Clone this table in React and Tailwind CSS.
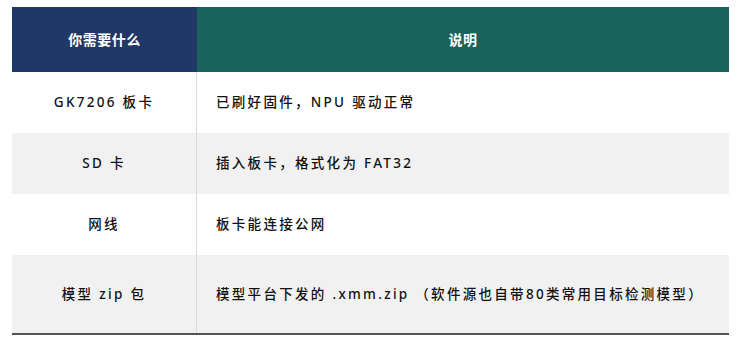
const ROWS = [
  { need: 'GK7206 板卡', desc: '已刷好固件，NPU 驱动正常', h: 'h-[61px]' },
  { need: 'SD 卡', desc: '插入板卡，格式化为 FAT32', h: 'h-[61px]' },
  { need: '网线', desc: '板卡能连接公网', h: 'h-[61px]' },
  { need: '模型 zip 包', desc: '模型平台下发的 .xmm.zip （软件源也自带80类常用目标检测模型）', h: 'h-[78px]' },
];

export default function App() {
  return (
    <div className="w-[738px] h-[343px] bg-white pt-[7px] pl-[12px] font-['Noto_Sans','Noto_Sans_CJK_SC',sans-serif]">
      <div className="w-[717px] border-b-2 border-[#555555]">
        {/* header */}
        <div className="grid grid-cols-[185px_1fr] h-[65px] text-white text-[14px] font-bold">
          <div className="bg-[#1f3868] flex items-center justify-center tracking-[0.5px]">你需要什么</div>
          <div className="bg-[#1a635c] flex items-center justify-center tracking-[0.5px]">说明</div>
        </div>

        {/* rows */}
        {ROWS.map((r, i) => (
          <div
            key={i}
            className={`grid grid-cols-[185px_1fr] ${r.h} text-[13.5px] font-medium text-[#111111] tracking-[2.3px] ${
              i % 2 === 1 ? 'bg-[#f1f1f1]' : 'bg-white'
            }`}
          >
            <div className="flex items-center justify-center border-r border-[#d9d9d9]">{r.need}</div>
            <div className="flex items-center pl-[19px]">{r.desc}</div>
          </div>
        ))}
      </div>
    </div>
  );
}
